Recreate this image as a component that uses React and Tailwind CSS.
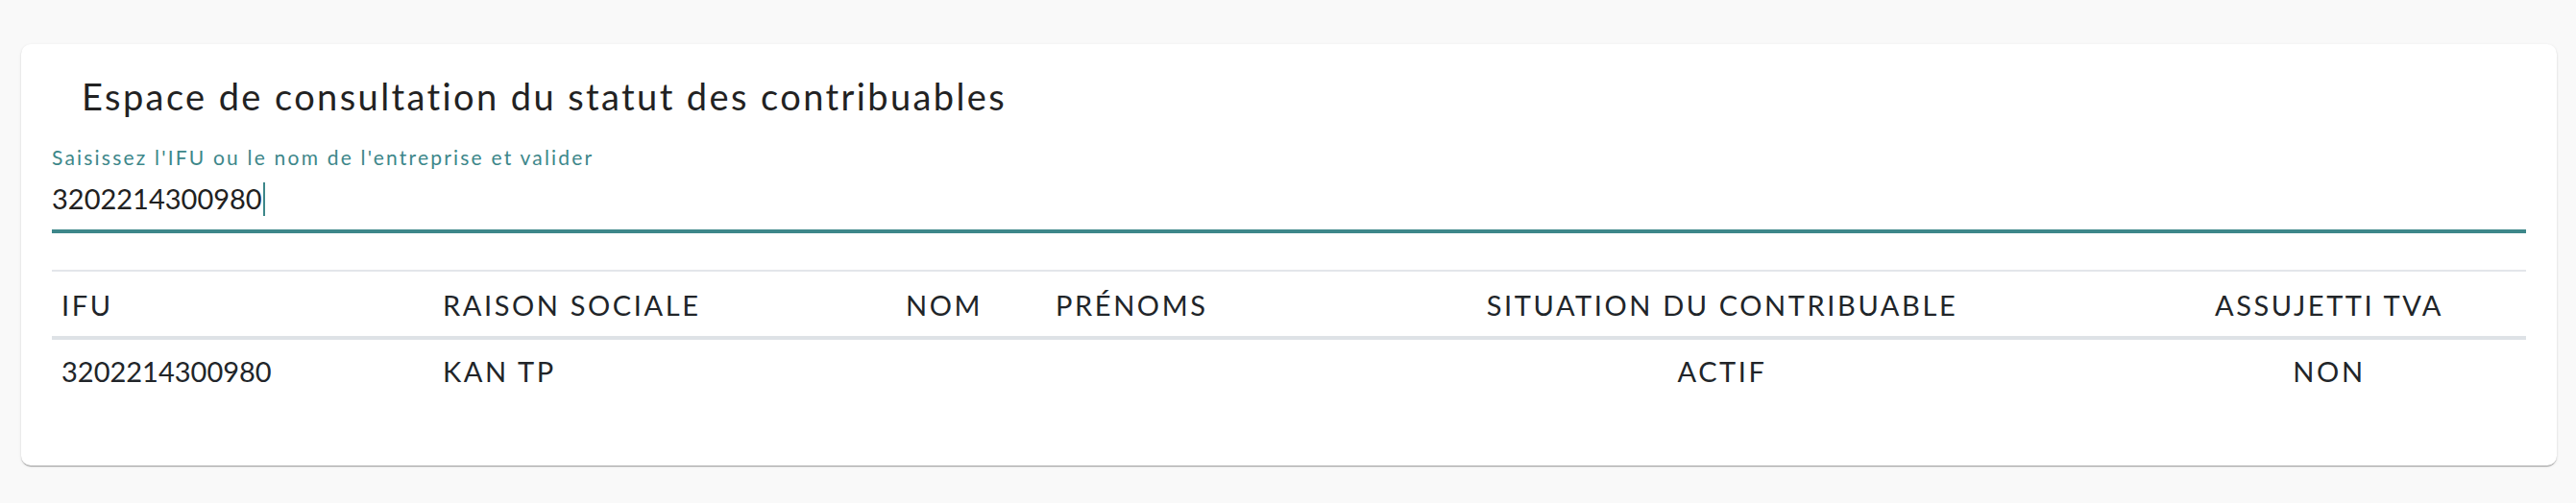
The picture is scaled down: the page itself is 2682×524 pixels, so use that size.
export default function App() {
  const font = { fontFamily: "Lato, 'Open Sans', sans-serif" };
  const cols = "grid grid-cols-[397px_482px_156px_277px_854px_410px]";
  return (
    <div className="min-h-[524px] w-full bg-[#f9f9f9] pt-[46px] pl-[22px] pr-[20px]" style={font}>
      <div className="rounded-[10px] bg-white px-[32px] pt-[30px] pb-[78px] shadow-[0_2px_1px_-1px_rgba(0,0,0,0.2),0_1px_1px_0_rgba(0,0,0,0.14),0_1px_3px_0_rgba(0,0,0,0.12)]">
        <h1 className="pl-[31px] text-[38px] leading-[48px] font-normal tracking-[2.4px] text-[#222222]">
          Espace de consultation du statut des contribuables
        </h1>
        <div className="mt-[28px]">
          <label className="block text-[21px] leading-[24px] tracking-[2.2px] text-[#3d878a]">
            Saisissez l'IFU ou le nom de l'entreprise et valider
          </label>
          <div className="mt-[13px] flex items-center text-[29px] leading-[36px] text-[#212121]">
            <span>3202214300980</span>
            <span className="ml-px inline-block h-[35px] w-[2px] bg-[#3d878a]"></span>
          </div>
          <div className="mt-[14px] h-[4px] bg-[#3d878a]"></div>
        </div>
        <div className="mt-[38px] border-t-2 border-[#e3e6ea] text-[29px] leading-[40px] text-[#212529]">
          <div className={`${cols} border-b-4 border-[#dee2e6] tracking-[2.6px]`}>
            <div className="pl-[10px] pt-[15px] pb-[12px]">IFU</div>
            <div className="pl-[10px] pt-[15px] pb-[12px]">RAISON SOCIALE</div>
            <div className="pl-[10px] pt-[15px] pb-[12px]">NOM</div>
            <div className="pl-[10px] pt-[15px] pb-[12px]">PRÉNOMS</div>
            <div className="pt-[15px] pb-[12px] text-center">SITUATION DU CONTRIBUABLE</div>
            <div className="pt-[15px] pb-[12px] text-center">ASSUJETTI TVA</div>
          </div>
          <div className={cols}>
            <div className="pl-[10px] pt-[13px]">3202214300980</div>
            <div className="pl-[10px] pt-[13px] tracking-[2.6px]">KAN TP</div>
            <div className="pl-[10px] pt-[13px]"></div>
            <div className="pl-[10px] pt-[13px]"></div>
            <div className="pt-[13px] text-center tracking-[2.6px]">ACTIF</div>
            <div className="pt-[13px] text-center tracking-[2.6px]">NON</div>
          </div>
        </div>
      </div>
    </div>
  );
}
